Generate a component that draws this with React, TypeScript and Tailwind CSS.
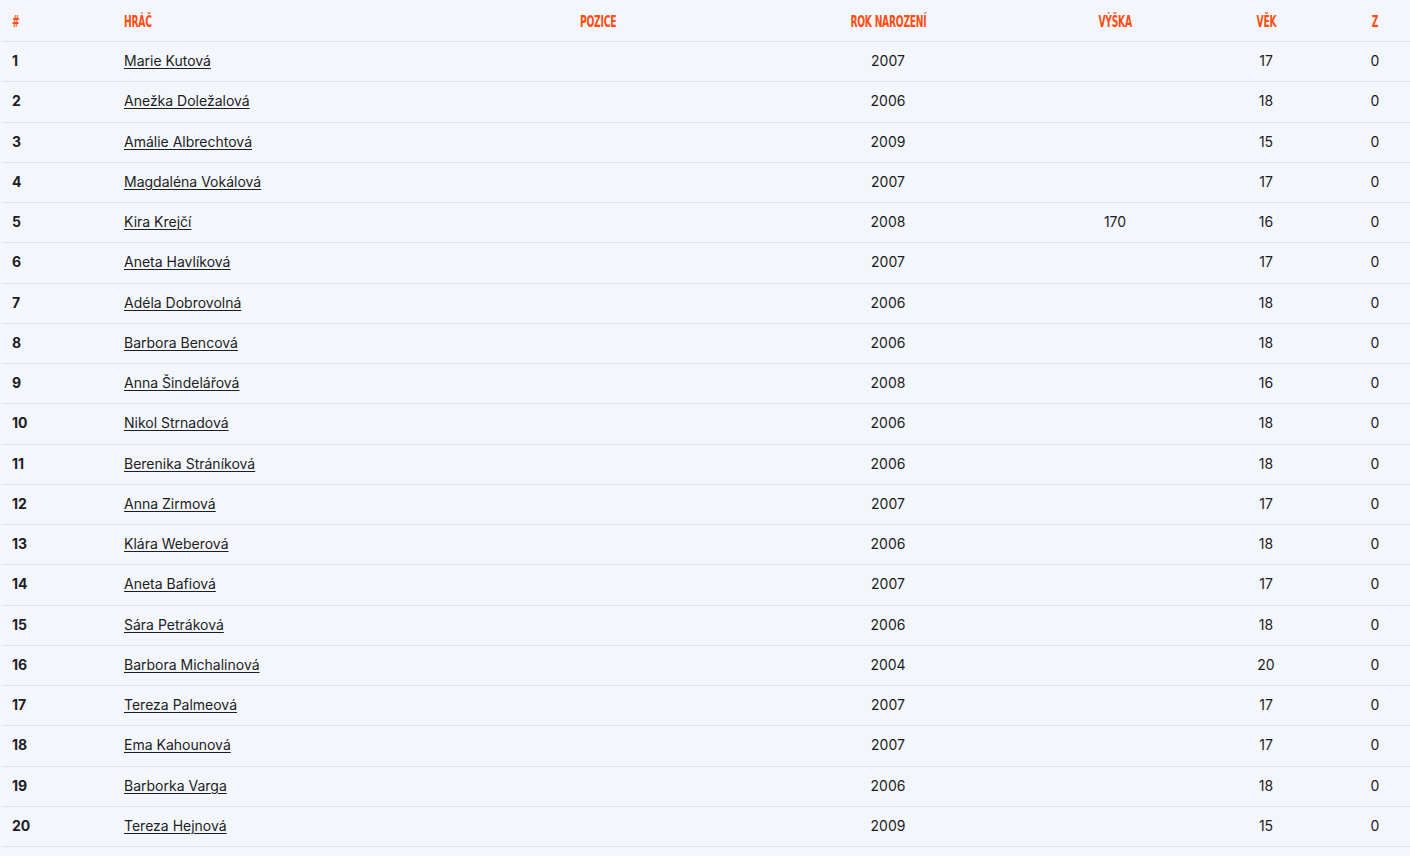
const players = [
  { name: "Marie Kutová", year: 2007, height: "", age: 17 },
  { name: "Anežka Doležalová", year: 2006, height: "", age: 18 },
  { name: "Amálie Albrechtová", year: 2009, height: "", age: 15 },
  { name: "Magdaléna Vokálová", year: 2007, height: "", age: 17 },
  { name: "Kira Krejčí", year: 2008, height: "170", age: 16 },
  { name: "Aneta Havlíková", year: 2007, height: "", age: 17 },
  { name: "Adéla Dobrovolná", year: 2006, height: "", age: 18 },
  { name: "Barbora Bencová", year: 2006, height: "", age: 18 },
  { name: "Anna Šindelářová", year: 2008, height: "", age: 16 },
  { name: "Nikol Strnadová", year: 2006, height: "", age: 18 },
  { name: "Berenika Stráníková", year: 2006, height: "", age: 18 },
  { name: "Anna Zirmová", year: 2007, height: "", age: 17 },
  { name: "Klára Weberová", year: 2006, height: "", age: 18 },
  { name: "Aneta Bafiová", year: 2007, height: "", age: 17 },
  { name: "Sára Petráková", year: 2006, height: "", age: 18 },
  { name: "Barbora Michalinová", year: 2004, height: "", age: 20 },
  { name: "Tereza Palmeová", year: 2007, height: "", age: 17 },
  { name: "Ema Kahounová", year: 2007, height: "", age: 17 },
  { name: "Barborka Varga", year: 2006, height: "", age: 18 },
  { name: "Tereza Hejnová", year: 2009, height: "", age: 15 },
];

const cols = "grid grid-cols-[112px_456px_210px_216px_238px_64px_1fr]";

const Head = ({ children, center }: { children: string; center?: boolean }) => (
  <span
    className={`inline-block translate-y-[1px] font-bold uppercase text-[16px] leading-none tracking-[-0.4px] text-[#ff4d12] scale-x-[0.64] ${
      center ? "origin-center" : "origin-left"
    }`}
    style={{ fontFamily: '"DejaVu Sans Condensed", "Liberation Sans", sans-serif', fontStretch: "condensed" }}
  >
    {children}
  </span>
);

export default function App() {
  return (
    <div
      className="min-h-[856px] w-full bg-[#f3f6fa] pl-[2px] text-[14px] text-[#1d1d24]"
      style={{ fontFamily: "Inter, 'Noto Sans', sans-serif" }}
    >
      <div className={`${cols} h-[42px] items-center border-b border-[#dfe3ea]`}>
        <div className="pl-[10px]"><Head>#</Head></div>
        <div className="pl-[10px]"><Head>Hráč</Head></div>
        <div className="pl-[10px]"><Head>Pozice</Head></div>
        <div className="text-center"><Head center>Rok narození</Head></div>
        <div className="text-center"><Head center>Výška</Head></div>
        <div className="text-center"><Head center>Věk</Head></div>
        <div className="pl-[42px] text-center"><Head center>Z</Head></div>
      </div>
      {players.map((p, i) => (
        <div
          key={p.name}
          className={`${cols} h-[40.25px] items-center pb-[2px] border-b border-[#dfe3ea]`}
        >
          <div className="pl-[10px] font-bold">{i + 1}</div>
          <div className="pl-[10px]">
            <a href="#" className="underline underline-offset-2 decoration-[1px]">
              {p.name}
            </a>
          </div>
          <div className="pl-[10px]"></div>
          <div className="text-center">{p.year}</div>
          <div className="text-center">{p.height}</div>
          <div className="text-center">{p.age}</div>
          <div className="pl-[42px] text-center">0</div>
        </div>
      ))}
    </div>
  );
}
